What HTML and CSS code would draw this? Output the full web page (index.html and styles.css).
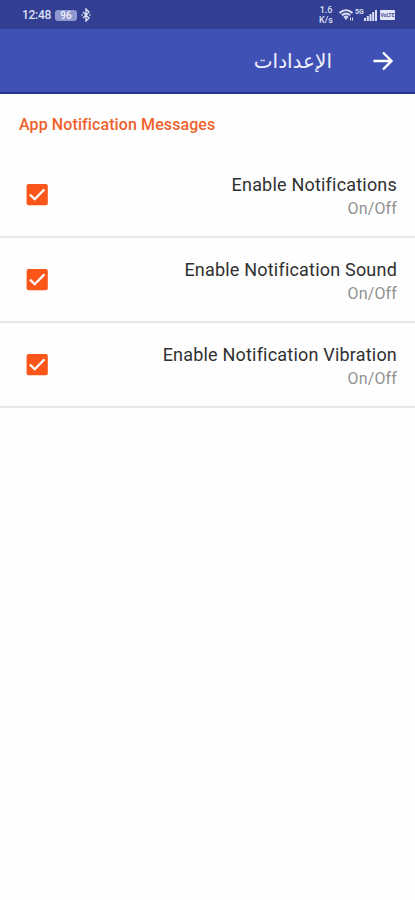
FILE: index.html
```html
<!DOCTYPE html>
<html lang="ar" dir="rtl">
<head>
<meta charset="utf-8">
<title>الإعدادات</title>
<link rel="stylesheet" href="styles.css">
</head>
<body>
<div class="status" dir="ltr">
  <div class="status-left">
    <span class="clock">12:48</span>
    <span class="battery">96</span>
    <svg class="bluetooth" width="10" height="14" viewBox="0 0 10 14"><path d="M2 4l6 6-3 3V1l3 3-6 6M.5 7h1.2M8.3 7h1.2"/></svg>
  </div>
  <div class="status-right">
    <span class="speed">1.6<br>K/s</span>
    <svg class="wifi" width="17" height="14" viewBox="0 0 17 14"><path d="M1.5 5c4-3.8 9-3.8 13 0M3.8 7.3c2.8-2.4 5.7-2.4 8.4 0M6 9.4c1.4-1.1 2.7-1.1 4 0"/><path class="solid" d="M6.3 10h3.4L8 12zM12 9.5h1v3h-1zM14 9.5h1v3h-1z"/></svg>
    <span class="network">5G</span>
    <svg class="signal" width="13" height="13" viewBox="0 0 13 13"><path d="M0 9h2v3H0zM2.8 7h2v5h-2zM5.5 5h2v7h-2zM8.2 3h2v9h-2zM11 1h2v11h-2z"/></svg>
    <span class="volte">VoLTE</span>
  </div>
</div>
<header class="toolbar">
  <svg class="back" width="24" height="24" viewBox="0 0 24 24"><path d="M2.5 12h17M12 3.5l8.5 8.5-8.5 8.5"/></svg>
  <h1 class="title">الإعدادات</h1>
</header>
<main>
  <h2 class="category" dir="ltr">App Notification Messages</h2>
  <div class="row">
    <div class="text" dir="ltr"><div class="name">Enable Notifications</div><div class="state">On/Off</div></div>
    <svg class="check" width="22" height="22" viewBox="0 0 22 22"><rect x=".6" width="21.2" height="21.2" rx="2"/><path d="M4 10.6l4.7 4.6L18.4 5.4"/></svg>
  </div>
  <div class="row">
    <div class="text" dir="ltr"><div class="name">Enable Notification Sound</div><div class="state">On/Off</div></div>
    <svg class="check" width="22" height="22" viewBox="0 0 22 22"><rect x=".6" width="21.2" height="21.2" rx="2"/><path d="M4 10.6l4.7 4.6L18.4 5.4"/></svg>
  </div>
  <div class="row">
    <div class="text" dir="ltr"><div class="name">Enable Notification Vibration</div><div class="state">On/Off</div></div>
    <svg class="check" width="22" height="22" viewBox="0 0 22 22"><rect x=".6" width="21.2" height="21.2" rx="2"/><path d="M4 10.6l4.7 4.6L18.4 5.4"/></svg>
  </div>
</main>
</body>
</html>
```
FILE: styles.css
```css
* { box-sizing: border-box; }
body { margin: 0; min-height: 900px; background: #fefefe; font-family: Roboto, "DejaVu Sans", sans-serif; }
.status { height: 29px; padding: 1px 20px 0 22px; background: #323f92; color: #dce0f5; display: flex; justify-content: space-between; align-items: center; }
.status-left, .status-right { display: flex; align-items: center; }
.clock { font-size: 12px; font-weight: 500; letter-spacing: -0.3px; width: 33px; }
.battery { width: 22px; height: 11px; border-radius: 3px; background: #8f99cf; color: #eef0fb; font-size: 10px; font-weight: 500; line-height: 11px; text-align: center; }
.bluetooth { margin-left: 4px; fill: none; stroke: #dce0f5; stroke-width: 1.4; }
.speed { font-size: 9px; font-weight: 500; line-height: 10px; text-align: center; width: 14px; margin-right: 5px; }
.wifi { fill: none; stroke: #dce0f5; stroke-width: 1.9; }
.wifi .solid { fill: #dce0f5; stroke: none; }
.network { font-size: 7px; font-weight: 700; line-height: 6px; width: 9px; margin-bottom: 7px; }
.signal { fill: #dce0f5; }
.volte { width: 15px; height: 10px; margin-left: 3px; border-radius: 1px; background: #e4e7f7; color: #4652a0; font-size: 5px; font-weight: 700; line-height: 10px; text-align: center; }
.toolbar { height: 65px; padding: 0 20px 0 0; background: #3f51b5; border-bottom: 2px solid #24378f; display: flex; align-items: center; }
.back { fill: none; stroke: #fff; stroke-width: 2.4; }
.title { margin: 0 39px 0 0; color: #eef0fc; font-size: 20px; font-weight: 400; line-height: 28px; }
.category { margin: 0; padding: 21px 19px 0; height: 59px; color: #ef622c; font-size: 16px; font-weight: 500; line-height: 19px; letter-spacing: 0.1px; }
.row { height: 85px; padding: 1px 18px 0 26px; border-bottom: 2px solid #e8e8e8; display: flex; justify-content: space-between; align-items: center; }
.text { padding-top: 3px; text-align: right; }
.name { color: #303030; font-size: 18px; line-height: 24px; letter-spacing: 0.2px; }
.state { color: #919191; font-size: 16px; line-height: 23px; letter-spacing: 0.15px; }
.check rect { fill: #fb5619; }
.check path { fill: none; stroke: #fff; stroke-width: 2.3; }
```
